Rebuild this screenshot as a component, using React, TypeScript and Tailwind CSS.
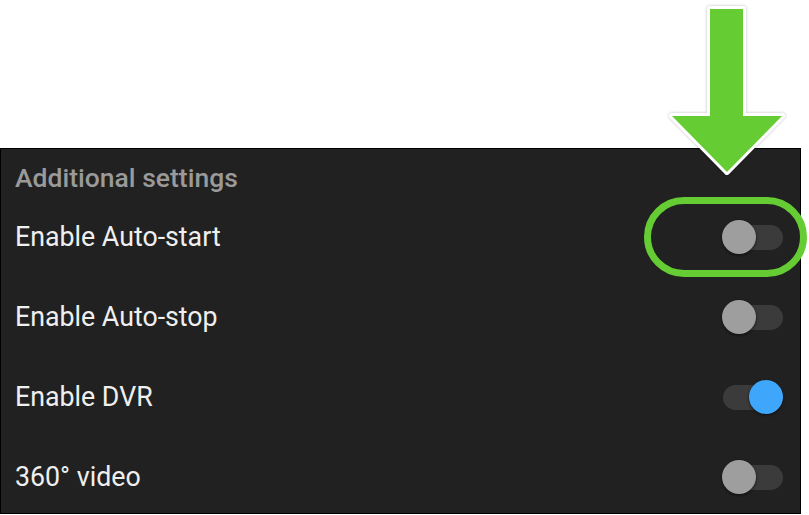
import React from "react";

function Toggle({ on }: { on: boolean }) {
  return (
    <div className="relative w-[61px] h-[34px] flex items-center">
      <div className="w-[60px] h-[25px] rounded-full bg-[#3b3b3b] ml-[1px]" />
      {on ? (
        <div className="absolute right-0 top-0 w-[34px] h-[34px] rounded-full bg-[#3ea6fb] shadow-[0_1px_3px_rgba(0,0,0,0.6)]" />
      ) : (
        <div className="absolute left-0 top-0 w-[34px] h-[34px] rounded-full bg-[#9e9e9e] shadow-[0_1px_3px_rgba(0,0,0,0.6)]" />
      )}
    </div>
  );
}

const rows: { label: string; on: boolean }[] = [
  { label: "Enable Auto-start", on: false },
  { label: "Enable Auto-stop", on: false },
  { label: "Enable DVR", on: true },
  { label: "360° video", on: false },
];

export default function App() {
  return (
    <div
      className="relative w-[809px] h-[515px] bg-white overflow-hidden"
      style={{ fontFamily: "Roboto, 'Noto Sans', sans-serif" }}
    >
      <div className="h-[148px]" />
      <div className="w-[801px] h-[366px] border border-black bg-[#212121] overflow-hidden">
        <div className="pl-[14px] pt-[14px] h-[48px] text-[26.5px] font-medium leading-[30px] text-[#9a9a9a]">
          Additional settings
        </div>
        {rows.map((r) => (
          <div key={r.label} className="h-[80px] flex items-center justify-between pl-[14px] pr-[17px]">
            <span className="text-[26.75px] text-[#efefef] leading-[30px]">{r.label}</span>
            <Toggle on={r.on} />
          </div>
        ))}
      </div>

      {/* green highlight pill */}
      <div className="absolute left-[644px] top-[197px] w-[163px] h-[80px] rounded-full border-[7px] border-[#66cc33]" />

      {/* arrow */}
      <svg
        className="absolute left-0 top-0"
        width="809"
        height="200"
        viewBox="0 0 809 200"
        style={{ filter: "drop-shadow(0 0 1.5px rgba(0,0,0,0.25))" }}
      >
        <polygon
          points="710,9 743,9 743,116 782,116 727,172 672,116 710,116"
          fill="#66cc33"
          stroke="#ffffff"
          strokeWidth="6"
          strokeLinejoin="round"
          paintOrder="stroke"
        />
      </svg>
    </div>
  );
}
